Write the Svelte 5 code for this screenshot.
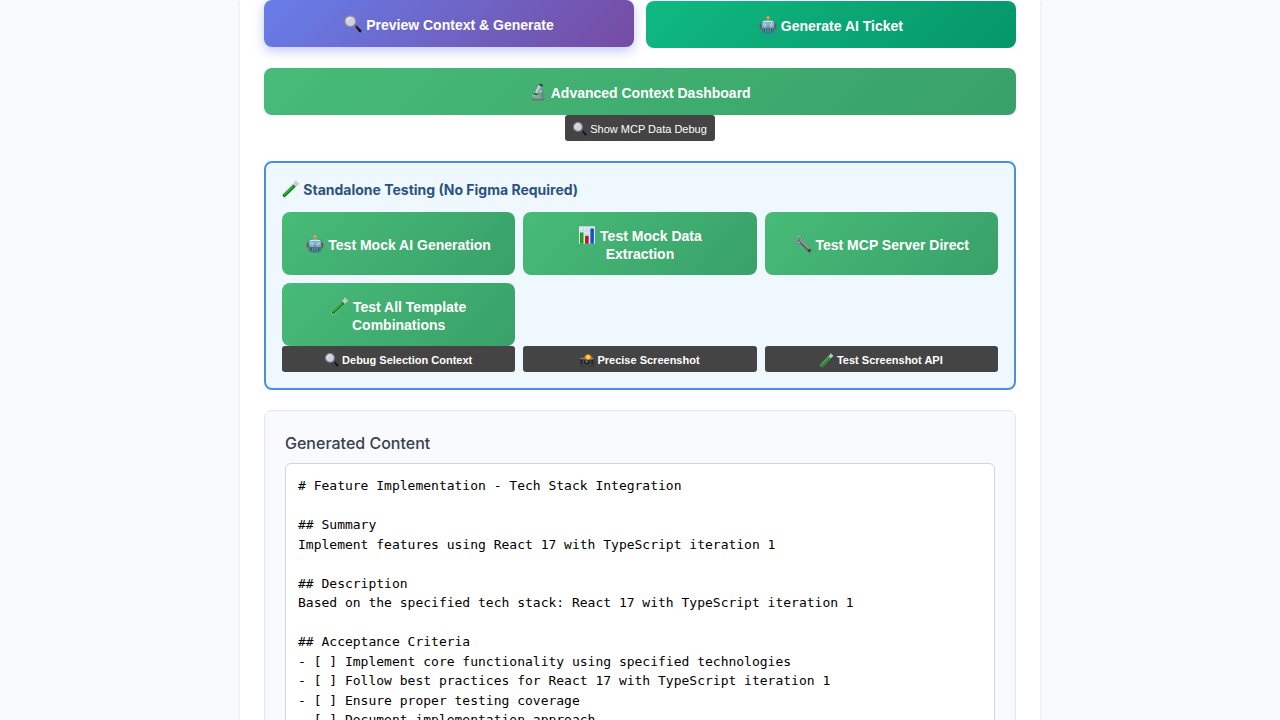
<script>
  const tests = [
    { icon: 'robot', label: 'Test Mock AI Generation' },
    { icon: 'chart', label: 'Test Mock Data Extraction' },
    { icon: 'wrench', label: 'Test MCP Server Direct' },
    { icon: 'tube', label: 'Test All Template Combinations' }
  ];

  const debugTools = [
    { icon: 'magnifier', label: 'Debug Selection Context' },
    { icon: 'camera', label: 'Precise Screenshot' },
    { icon: 'tube', label: 'Test Screenshot API' }
  ];

  let content = $state(`# Feature Implementation - Tech Stack Integration

## Summary
Implement features using React 17 with TypeScript iteration 1

## Description
Based on the specified tech stack: React 17 with TypeScript iteration 1

## Acceptance Criteria
- [ ] Implement core functionality using specified technologies
- [ ] Follow best practices for React 17 with TypeScript iteration 1
- [ ] Ensure proper testing coverage
- [ ] Document implementation approach`);
</script>

<svelte:head>
  <title>AI Ticket Generator</title>
</svelte:head>

{#snippet icon(name)}
  <svg class="icon" viewBox="0 0 18 18" aria-hidden="true">
    {#if name === 'magnifier'}
      <path d="M10.6 11.2l1.3-1.3 5.3 5.2q.7.9-.2 1.8t-1.8.2z" fill="#17171a" />
      <path d="M9.6 10.8l1-1 1.8 1.7-1.1 1.1z" fill="#77777d" />
      <circle cx="6.3" cy="6.3" r="5.6" fill="#cfd0e6" stroke="#85868c" stroke-width="1.4" />
      <path d="M2.8 6.3a3.8 3.8 0 0 1 4-3.5" fill="none" stroke="#e7e8f4" stroke-width="1.2" />
    {:else if name === 'robot'}
      <path d="M8.3 2h1.4v3H8.3z" fill="#b8792b" />
      <circle cx="9" cy="1.6" r="1.5" fill="#f2a431" />
      <rect x="0.7" y="7.4" width="2.4" height="5" rx="1" fill="#a8383e" />
      <rect x="14.9" y="7.4" width="2.4" height="5" rx="1" fill="#a8383e" />
      <path d="M2 7.5Q2 4 5.5 4h7Q16 4 16 7.5l-.3 6q-.3 3.9-3.9 3.9H6.2q-3.6 0-3.9-3.9z" fill="#3f7890" />
      <path d="M2.8 7.3q.2-2.7 2.7-2.7h7q2.5 0 2.7 2.7l-.3 4.2q-5.9 1.2-11.8 0z" fill="#86bccd" />
      <path d="M4 5.6q5-1 10 0" fill="none" stroke="#d9eef3" stroke-width="1" />
      <circle cx="5.9" cy="8.8" r="2" fill="#effcff" stroke="#397487" stroke-width=".6" />
      <circle cx="12.1" cy="8.8" r="2" fill="#effcff" stroke="#397487" stroke-width=".6" />
      <circle cx="5.9" cy="8.8" r=".9" fill="#36b5d5" />
      <circle cx="12.1" cy="8.8" r=".9" fill="#36b5d5" />
      <path d="M9 9.6l1.3 2.2H7.7z" fill="#d24c4c" />
      <rect x="5" y="13" width="8" height="2.6" rx="1" fill="#275060" />
      <path d="M6.5 13v2.6M8.2 13v2.6M9.8 13v2.6M11.5 13v2.6" stroke="#94b8c0" stroke-width=".7" />
    {:else if name === 'microscope'}
      <path d="M3.4 15.4h11.2l1 2H2.4z" fill="#68727a" />
      <path d="M9 7.6q5 .5 4 4.6-.5 2.1-2.6 3.4h2.7q2.8-2.2 2.2-5.3-.6-3.5-5.2-4.2z" fill="#73818a" />
      <path d="M9.5 1.4l3.7 1.9-4.2 8-3.6-1.9z" fill="#92a1ac" />
      <path d="M10 2.2l1.4.7-4 7.6-1.4-.7z" fill="#d1dae0" />
      <path d="M11 .4l3.2 1.7-1 1.6L10 2z" fill="#34393f" />
      <path d="M5.5 9.4l3.5 1.9-1 1.4-2.8-1.6z" fill="#3f484f" />
      <path d="M3 12.3h7.8v1.3H3z" fill="#a8b3ba" />
      <circle cx="11.6" cy="8.4" r="1.3" fill="#b7c4cc" />
      <path d="M4.5 14.4h8v1h-8z" fill="#a0abb3" />
    {:else if name === 'tube'}
      <path d="M13.3 1.7l3 2.8L3.6 16.9q-1.4 1.1-2.6 0-1.1-1.4 0-2.7z" fill="#c0cec3" />
      <path d="M11.2 4.4l2.4 2.3L3.4 16.6q-1.2.8-2.2-.1-.8-1.1.1-2.2z" fill="#0b7817" />
      <path d="M11 5.6l.8.8-9.1 8.9-.8-.7z" fill="#31c933" />
      <path d="M12.8 1.2l.9-.9 3.7 3.5-1 .9z" fill="#b2bab6" />
      <path d="M13.5 1.1l3 2.9" stroke="#eef3ef" stroke-width=".7" />
    {:else if name === 'chart'}
      <rect x="1" y="0.3" width="16" height="17.4" fill="#dce7f0" />
      <path d="M1.5 4.8h15M1.5 8.8h15M1.5 12.8h15M5.5 1v16.5M9.2 1v16.5M12.9 1v16.5" stroke="#b8c9d6" stroke-width=".5" />
      <rect x="2" y="6.5" width="3.4" height="11.2" fill="#13a51d" />
      <rect x="7.1" y="9.8" width="3.6" height="7.9" fill="#c21420" />
      <rect x="12.4" y="2.5" width="3.5" height="15.2" fill="#1454c2" />
    {:else if name === 'wrench'}
      <path d="M.4 3.8l2.8 2 2-.7.4-2L2.8 1q3-.8 4.8 1.3 1.3 1.7.5 3.8l8.9 8.2q1.2 1.4 0 2.9-1.4 1.2-2.9 0L5.7 8.4q-2 .7-3.9-.6Q-.1 6 .4 3.8z" fill="#6b7174" />
      <path d="M3.4 1.3q2-.1 3.3 1.4 1 1.4.4 3.2l8 7.7M1 4.5q.2 2 1.7 2.7 1.5.7 3.2 0" fill="none" stroke="#b5bcbf" stroke-width="1" />
      <path d="M7 8.2l6.4 6" stroke="#4a5053" stroke-width=".7" />
      <circle cx="15.3" cy="15.5" r="1.1" fill="#1e2224" />
    {:else if name === 'camera'}
      <path d="M.3 5.5h3.5L5.2 4h7.6l1.4 1.5h3.5v10.9q0 .8-.8.8H1.1q-.8 0-.8-.8z" fill="#2c2c2c" />
      <path d="M.6 5.8h16.8v2.3H.6z" fill="#858585" />
      <path d="M.6 14.8h16.8V16H.6z" fill="#555" />
      <circle cx="9" cy="11.6" r="4.7" fill="#1a1c20" stroke="#74777b" stroke-width=".8" />
      <circle cx="9" cy="11.6" r="2.6" fill="#37434e" />
      <circle cx="8" cy="10.6" r=".8" fill="#8ca3b3" />
      <path d="M10 .5l1.3 2 2.2-1-.1 2.5 2.7.7-2.2 1.4 1 2.2-2.6-.3L10 9.5 8.6 8l-2.5.4 1-2.3L5 4.7 7.4 4l.1-2.4 2 .9z" fill="#f79a14" />
      <circle cx="10.3" cy="5" r="2.2" fill="#ffe17a" />
    {/if}
  </svg>
{/snippet}

<main>
  <div class="primary-actions">
    <button type="button" class="btn preview">{@render icon('magnifier')} Preview Context &amp; Generate</button>
    <button type="button" class="btn generate">{@render icon('robot')} Generate AI Ticket</button>
  </div>

  <div class="advanced">
    <button type="button" class="btn">{@render icon('microscope')} Advanced Context Dashboard</button>
    <button type="button" class="debug">{@render icon('magnifier')} Show MCP Data Debug</button>
  </div>

  <section class="testing">
    <h2>{@render icon('tube')} Standalone Testing (No Figma Required)</h2>
    <div class="test-grid">
      {#each tests as test}
        <button type="button" class="btn">{@render icon(test.icon)} {test.label}</button>
      {/each}
    </div>
    <div class="test-grid">
      {#each debugTools as tool}
        <button type="button" class="debug strong">{@render icon(tool.icon)} {tool.label}</button>
      {/each}
    </div>
  </section>

  <section class="output">
    <label for="generated">Generated Content</label>
    <textarea id="generated" rows="20" spellcheck="false" bind:value={content}></textarea>
  </section>
</main>

<style>
  :global(body) {
    background: #f8fafc;
  }

  main {
    box-sizing: border-box;
    max-width: 800px;
    margin: 0 auto;
    padding: 1px 24px 24px;
    background: #fff;
    box-shadow: 0 1px 3px rgba(0, 0, 0, 0.1);
    font-family: Inter, sans-serif;
    display: flex;
    flex-direction: column;
    gap: 20px;
  }

  button {
    border: none;
    color: #fff;
    font-family: "Liberation Sans", Arial, sans-serif;
    cursor: pointer;
  }

  .icon {
    width: 18px;
    height: 18px;
    margin: -4px 0;
    vertical-align: 1px;
  }

  .btn {
    min-height: 47px;
    padding: 15px 24px 12px;
    border-radius: 8px;
    background: linear-gradient(135deg, #48bb78, #38a169);
    font-size: 14px;
    font-weight: 600;
    line-height: 18px;
  }

  .primary-actions {
    display: grid;
    grid-template-columns: 1fr 1fr;
    gap: 12px;
  }

  .preview {
    background: linear-gradient(135deg, #667eea, #764ba2);
    box-shadow: 0 4px 12px rgba(102, 126, 234, 0.4);
    transform: translateY(-1px);
  }

  .generate {
    background: linear-gradient(135deg, #10b981, #059669);
  }

  .advanced {
    display: flex;
    flex-direction: column;
  }

  .debug {
    padding: 7px 8px 5px;
    border-radius: 3px;
    background: #444;
    font-size: 11px;
    line-height: 14px;
  }

  .debug .icon {
    width: 14px;
    height: 14px;
  }

  .advanced .debug {
    align-self: center;
  }

  .strong {
    font-weight: 600;
  }

  .testing {
    padding: 16px;
    border: 2px solid #4a90e2;
    border-radius: 8px;
    background: #f0f8ff;
  }

  h2 {
    margin: 0 0 12px;
    color: #2c5282;
    font-size: 14px;
    font-weight: 700;
    line-height: 21px;
  }

  .test-grid {
    display: grid;
    grid-template-columns: repeat(3, 1fr);
    gap: 8px;
  }

  .output {
    display: flex;
    flex-direction: column;
    gap: 8px;
    padding: 20px;
    border: 1px solid #e2e8f0;
    border-radius: 8px;
    background: #f8fafc;
  }

  label {
    color: #374151;
    font-size: 16px;
    font-weight: 500;
    line-height: 24px;
  }

  textarea {
    box-sizing: border-box;
    width: 100%;
    padding: 12px;
    border: 1px solid #cbd5e0;
    border-radius: 6px;
    background: #fff;
    color: #000;
    font-family: "DejaVu Sans Mono", monospace;
    font-size: 13px;
    line-height: 1.5;
    resize: vertical;
  }
</style>
